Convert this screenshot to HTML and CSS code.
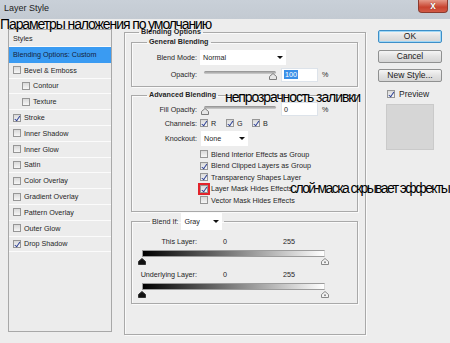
FILE: index.html
```html
<!DOCTYPE html>
<html lang="ru">
<head>
    <meta charset="UTF-8">
    <title>Layer Style</title>
    <link rel="stylesheet" href="styles.css">
</head>
<body>
    <div class="titlebar">
        <span class="title">Layer Style</span>
        <span class="close">x</span>
    </div>

    <div class="dialog">
        <!-- левая колонка: список стилей -->
        <div class="styles-list">
            <div class="row head">Styles</div>
            <div class="row active">Blending Options: Custom</div>
            <div class="row"><span class="cb"></span>Bevel &amp; Emboss</div>
            <div class="row sub"><span class="cb"></span>Contour</div>
            <div class="row sub"><span class="cb"></span>Texture</div>
            <div class="row"><span class="cb on"></span>Stroke</div>
            <div class="row"><span class="cb"></span>Inner Shadow</div>
            <div class="row"><span class="cb"></span>Inner Glow</div>
            <div class="row"><span class="cb"></span>Satin</div>
            <div class="row"><span class="cb"></span>Color Overlay</div>
            <div class="row"><span class="cb"></span>Gradient Overlay</div>
            <div class="row"><span class="cb"></span>Pattern Overlay</div>
            <div class="row"><span class="cb"></span>Outer Glow</div>
            <div class="row"><span class="cb on"></span>Drop Shadow</div>
        </div>

        <!-- средняя колонка -->
        <fieldset class="group outer">
            <legend>Blending Options</legend>

            <fieldset class="group general">
                <legend>General Blending</legend>
                <div class="field r-mode">
                    <label>Blend Mode:</label>
                    <div class="select w-mode">Normal<span class="arrow"></span></div>
                </div>
                <div class="field r-op">
                    <label>Opacity:</label>
                    <div class="slider end">
                        <div class="track"></div>
                        <svg class="thumb" width="8" height="7" viewBox="0 0 8 7"><path d="M4 .5 L7.5 3.5 V6.5 H.5 V3.5 Z" fill="#e6e6e6" stroke="#7c7c7c"/></svg>
                    </div>
                    <div class="input"><span class="sel">100</span></div>
                    <span class="pct">%</span>
                </div>
            </fieldset>

            <fieldset class="group advanced">
                <legend>Advanced Blending</legend>
                <div class="field r-fill">
                    <label>Fill Opacity:</label>
                    <div class="slider">
                        <div class="track"></div>
                        <svg class="thumb" width="8" height="7" viewBox="0 0 8 7"><path d="M4 .5 L7.5 3.5 V6.5 H.5 V3.5 Z" fill="#e6e6e6" stroke="#7c7c7c"/></svg>
                    </div>
                    <div class="input">0</div>
                    <span class="pct">%</span>
                </div>
                <div class="field r-chan">
                    <label>Channels:</label>
                    <span class="chan"><span class="cb on"></span>R</span>
                    <span class="chan"><span class="cb on"></span>G</span>
                    <span class="chan"><span class="cb on"></span>B</span>
                </div>
                <div class="field r-knock">
                    <label>Knockout:</label>
                    <div class="select w-knock">None<span class="arrow"></span></div>
                </div>
                <div class="checks">
                    <div class="check"><span class="cb"></span>Blend Interior Effects as Group</div>
                    <div class="check"><span class="cb on"></span>Blend Clipped Layers as Group</div>
                    <div class="check"><span class="cb on"></span>Transparency Shapes Layer</div>
                    <div class="check"><span class="cb on marked"></span>Layer Mask Hides Effects</div>
                    <div class="check"><span class="cb"></span>Vector Mask Hides Effects</div>
                </div>
            </fieldset>

            <fieldset class="group blendif">
                <legend><span class="blend-if">Blend If:<span class="select w-gray">Gray<span class="arrow"></span></span></span></legend>
                <div class="field r-layer">
                    <label>This Layer:</label>
                    <span class="lo">0</span><span>255</span>
                </div>
                <div class="gradient"></div>
                <div class="stops">
                    <svg width="8" height="7" viewBox="0 0 8 7"><path d="M4 .5 L7.5 3.5 V6.5 H.5 V3.5 Z" fill="#111" stroke="#333"/></svg>
                    <svg width="8" height="7" viewBox="0 0 8 7"><path d="M4 .5 L7.5 3.5 V6.5 H.5 V3.5 Z" fill="#f4f4f4" stroke="#888"/><circle cx="4" cy="4.3" r="1" fill="#888"/></svg>
                </div>
                <div class="field r-under">
                    <label>Underlying Layer:</label>
                    <span class="lo">0</span><span>255</span>
                </div>
                <div class="gradient"></div>
                <div class="stops">
                    <svg width="8" height="7" viewBox="0 0 8 7"><path d="M4 .5 L7.5 3.5 V6.5 H.5 V3.5 Z" fill="#111" stroke="#333"/></svg>
                    <svg width="8" height="7" viewBox="0 0 8 7"><path d="M4 .5 L7.5 3.5 V6.5 H.5 V3.5 Z" fill="#f4f4f4" stroke="#888"/><circle cx="4" cy="4.3" r="1" fill="#888"/></svg>
                </div>
            </fieldset>
        </fieldset>

        <!-- правая колонка: кнопки -->
        <div class="actions">
            <button class="btn default">OK</button>
            <button class="btn">Cancel</button>
            <button class="btn">New Style...</button>
            <div class="preview"><span class="cb on"></span>Preview</div>
            <div class="swatch"></div>
        </div>
    </div>

    <!-- подписи поверх скриншота -->
    <div class="caption c-defaults">Параметры наложения по умолчанию</div>
    <div class="caption c-fill">непрозрачность заливки</div>
    <div class="caption c-mask">слой-маска скрывает эффекты</div>
</body>
</html>
```
FILE: styles.css
```css
* {
    margin: 0;
    padding: 0;
    box-sizing: border-box;
}

body {
    width: 450px;
    height: 343px;
    overflow: hidden;
    position: relative;
    background: #ededed;
    font-family: "Liberation Sans", Arial, sans-serif;
    font-size: 7.2px;
    color: #1f1f1f;
}

/* заголовок окна */
.titlebar {
    height: 19px;
    background: linear-gradient(#c9d0d8, #c3cad2);
    display: flex;
    align-items: flex-start;
    justify-content: space-between;
}

.title {
    font-size: 9px;
    line-height: 16px;
    padding-left: 4px;
    color: #222;
}

.close {
    width: 30px;
    height: 13px;
    margin-right: 2px;
    border: 1px solid #8b3a2e;
    border-top: none;
    border-radius: 0 0 4px 4px;
    background: linear-gradient(#e59a89, #c8432f 60%, #d25a45);
    color: #fff;
    font-weight: bold;
    font-size: 10px;
    line-height: 11px;
    text-align: center;
    text-shadow: 0 0 1px #5a1a10;
}

.dialog {
    display: flex;
    align-items: flex-start;
    padding: 8px 8px 0 8px;
}

/* список стилей */
.styles-list {
    width: 104px;
    height: 303px;
    margin-top: 2px;
    border: 1px solid #a8a8a8;
    background: #ececec;
}

.styles-list .row {
    height: 15.8px;
    display: flex;
    align-items: center;
    padding-left: 4px;
    border-bottom: 1px solid #fbfbfb;
}

.styles-list .row.head {
    height: 17px;
    padding-left: 4px;
}

.styles-list .row.active {
    height: 15.8px;
    background: #3a9bf2;
    color: #14223a;
    border-bottom-color: #3a9bf2;
}

.styles-list .row.sub {
    padding-left: 13px;
}

.styles-list .cb {
    margin-right: 3px;
}

/* чекбоксы */
.cb {
    display: inline-block;
    flex: none;
    width: 8px;
    height: 8px;
    border: 1px solid #969696;
    background: linear-gradient(#d9d9d9, #f6f6f6);
    position: relative;
}

.cb.on::after {
    content: "";
    position: absolute;
    left: 2px;
    top: 0;
    width: 2px;
    height: 4.5px;
    border: solid #2b3f95;
    border-width: 0 1.4px 1.4px 0;
    transform: rotate(35deg);
}

.cb.marked {
    outline: 2px solid #e2232b;
}

/* группы */
.group {
    border: 1px solid #a9a9a9;
    box-shadow: inset 1px 1px 0 #fafafa, 1px 1px 0 #fafafa;
    min-width: 0;
}

.group legend {
    font-weight: bold;
    line-height: 10px;
    padding: 0 2px;
}

.outer {
    width: 242px;
    height: 308px;
    margin-left: 12px;
}

.outer > legend {
    margin-left: 14px;
}

.general,
.advanced,
.blendif {
    margin: 0 7px 0 6px;
}

.general legend,
.advanced legend {
    margin-left: 15px;
}

.general {
    padding-bottom: 5px;
}

.advanced {
    margin-top: 3px;
    padding-bottom: 5px;
}

.blendif {
    margin-top: 1px;
    padding-bottom: 5px;
}

.blendif legend {
    margin-left: 18px;
    padding: 0 2px;
    font-weight: normal;
    line-height: 17px;
}

.blend-if {
    display: flex;
    align-items: center;
    gap: 3px;
}

/* строки полей */
.field {
    display: flex;
    align-items: center;
}

.field label {
    width: 65px;
    text-align: right;
    margin-right: 3px;
    flex: none;
}

.r-mode { margin-top: 3px; height: 15px; }
.r-op { margin-top: 3px; height: 13px; }
.r-fill { margin-top: 2px; height: 14px; }
.r-chan { margin-top: 1px; height: 12px; }
.r-knock { margin-top: 2px; height: 15px; }

.select {
    height: 15px;
    background: #fff;
    display: flex;
    align-items: center;
    justify-content: space-between;
    padding: 0 3px 0 3px;
}

.w-mode { width: 86px; }
.w-knock { width: 47px; margin-left: 1px; }
.w-gray { width: 41px; height: 17px; }

.arrow {
    width: 0;
    height: 0;
    border-left: 3px solid transparent;
    border-right: 3px solid transparent;
    border-top: 3px solid #111;
}

/* слайдеры */
.slider {
    width: 78px;
    height: 13px;
    display: flex;
    flex-direction: column;
    padding: 3px 0 0 1px;
}

.slider .track {
    height: 3px;
    margin: 0 2px 0 3px;
    border-radius: 2px;
    background: linear-gradient(#8e8e8e, #d0d0d0);
}

.slider .thumb {
    margin-top: -1px;
}

.slider.end .thumb {
    align-self: flex-end;
    margin-right: 1px;
}

.input {
    width: 37px;
    height: 14px;
    margin-left: 3px;
    background: #fff;
    border: 1px solid #dde3ea;
    padding-left: 2px;
    display: flex;
    align-items: center;
}

.input .sel {
    background: #3a8fe8;
    color: #fff;
    padding: 0 1px;
}

.pct {
    margin-left: 4px;
}

.chan {
    display: flex;
    align-items: center;
    width: 26px;
}

.chan .cb {
    margin-right: 3px;
}

.checks {
    margin-top: 2.5px;
    padding-left: 68px;
}

.check {
    height: 11.5px;
    display: flex;
    align-items: center;
}

.check .cb {
    margin-right: 3px;
}

/* Blend If */
.r-layer { margin-top: 5px; height: 12px; }
.r-under { margin-top: 3px; height: 12px; }

.field .lo {
    margin-left: 23px;
    width: 60px;
}

.gradient {
    width: 183px;
    height: 7px;
    margin: 3px 0 0 10px;
    border: 1px solid #9c9c9c;
    border-right-color: #d8d8d8;
    background: linear-gradient(to right, #000, #fff);
}

.stops {
    width: 191px;
    height: 7px;
    margin: 1px 0 0 6px;
    display: flex;
    justify-content: space-between;
}

/* кнопки справа */
.actions {
    width: 64px;
    margin-left: 12px;
    margin-top: 3px;
    display: flex;
    flex-direction: column;
}

.btn {
    height: 13px;
    margin-bottom: 6.5px;
    border: 1px solid #8f9090;
    border-radius: 2px;
    background: linear-gradient(#f5f5f5, #e2e2e2 50%, #d5d5d5);
    font-family: "Liberation Sans", Arial, sans-serif;
    font-size: 8.5px;
    color: #1a1a1a;
    line-height: 11px;
}

.btn.default {
    border-color: #3d8fc8;
    box-shadow: inset 0 0 0 1px #9fd7f6;
}

.preview {
    display: flex;
    align-items: center;
    margin: 0 0 0 9px;
    font-size: 8.5px;
    height: 10px;
}

.preview .cb {
    margin-right: 4px;
}

.swatch {
    width: 48px;
    height: 46px;
    margin: 5px 0 0 8px;
    background: #d6d6d6;
    border: 1px solid #cacaca;
}

/* подписи поверх */
.caption {
    position: absolute;
    font-family: "Liberation Sans", Arial, sans-serif;
    font-size: 14px;
    line-height: 14px;
    letter-spacing: -1.1px;
    color: #000;
    white-space: nowrap;
}

.c-defaults { left: 0; top: 17px; }
.c-fill { left: 225px; top: 90px; }
.c-mask { left: 290px; top: 181px; letter-spacing: -1.6px; }
```
